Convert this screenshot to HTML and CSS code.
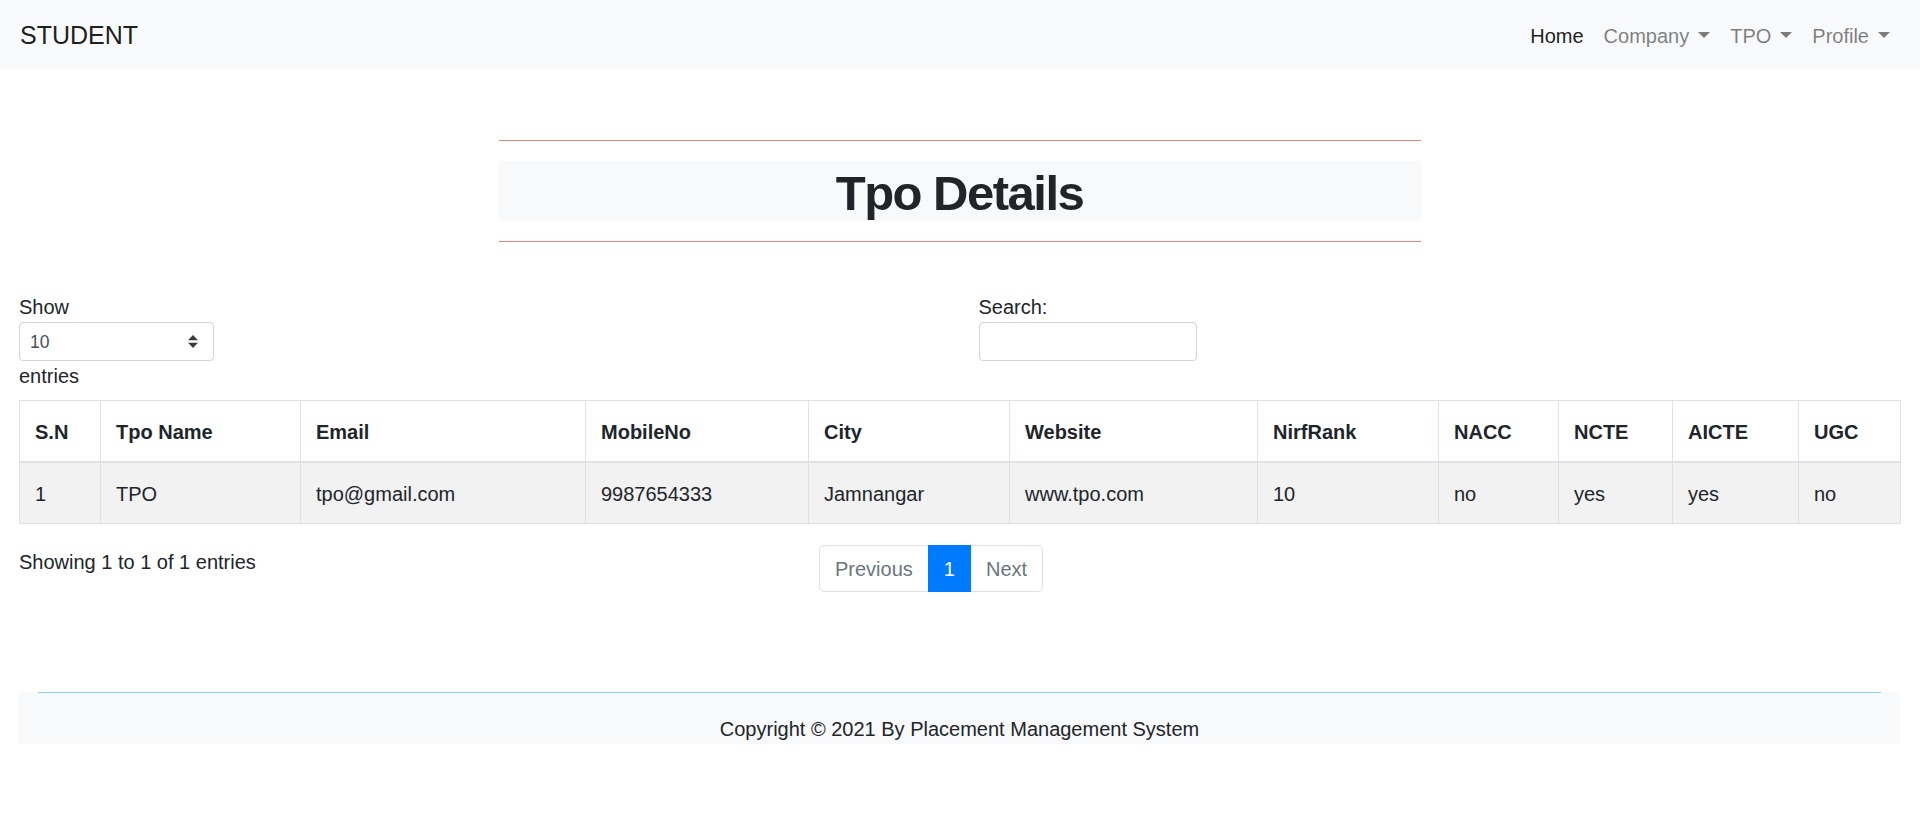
FILE: index.html
```html
<!DOCTYPE html>
<html lang="en">
<head>
<meta charset="utf-8">
<title>Tpo Details</title>
<link rel="stylesheet" href="styles.css">
</head>
<body>
<nav class="navbar">
  <a class="brand" href="#">STUDENT</a>
  <ul class="nav">
    <li><a class="nav-link active" href="#">Home</a></li>
    <li><a class="nav-link" href="#">Company<span class="caret"></span></a></li>
    <li><a class="nav-link" href="#">TPO<span class="caret"></span></a></li>
    <li><a class="nav-link" href="#">Profile<span class="caret"></span></a></li>
  </ul>
</nav>

<main class="page">
  <section class="title-wrap">
    <div class="rule"></div>
    <h1 class="title">Tpo Details</h1>
    <div class="rule"></div>
  </section>

  <div class="dt-top">
    <div class="dt-length">
      <label class="dt-label">Show
        <select class="select-sm">
          <option>10</option>
          <option>25</option>
          <option>50</option>
          <option>100</option>
        </select>
        entries</label>
    </div>
    <div class="dt-filter">
      <label class="dt-label">Search:
        <input class="input-sm" type="search">
      </label>
    </div>
  </div>

  <table class="table">
    <colgroup>
      <col class="c1"><col class="c2"><col class="c3"><col class="c4"><col class="c5"><col class="c6"><col class="c7"><col class="c8"><col class="c9"><col class="c10"><col class="c11">
    </colgroup>
    <thead>
      <tr>
        <th>S.N</th><th>Tpo Name</th><th>Email</th><th>MobileNo</th><th>City</th><th>Website</th><th>NirfRank</th><th>NACC</th><th>NCTE</th><th>AICTE</th><th>UGC</th>
      </tr>
    </thead>
    <tbody>
      <tr class="odd">
        <td>1</td><td>TPO</td><td>tpo@gmail.com</td><td>9987654333</td><td>Jamnangar</td><td>www.tpo.com</td><td>10</td><td>no</td><td>yes</td><td>yes</td><td>no</td>
      </tr>
    </tbody>
  </table>

  <div class="dt-bottom">
    <div class="dt-info">Showing 1 to 1 of 1 entries</div>
    <ul class="pagination">
      <li class="page-item disabled first"><a class="page-link" href="#">Previous</a></li>
      <li class="page-item active"><a class="page-link" href="#">1</a></li>
      <li class="page-item disabled last"><a class="page-link" href="#">Next</a></li>
    </ul>
  </div>
</main>

<footer class="footer">
  <div class="footer-rule"></div>
  <p class="copy">Copyright &copy; 2021 By Placement Management System</p>
</footer>
</body>
</html>
```

FILE: styles.css
```css
* { box-sizing: border-box; }

html, body {
  margin: 0;
  padding: 0;
}

body {
  font-family: "Segoe UI", "Liberation Sans", Arial, sans-serif;
  font-size: 20px;
  line-height: 1.5;
  color: #212529;
  background: #fff;
}

a { text-decoration: none; }

/* Navbar */
.navbar {
  display: flex;
  align-items: center;
  justify-content: space-between;
  height: 70px;
  padding: 10px 20px;
  background: #f8f9fa;
}

.brand {
  font-size: 25px;
  line-height: 37.5px;
  padding-top: 2px;
  color: rgba(0, 0, 0, 0.9);
}

.nav {
  display: flex;
  list-style: none;
  margin: 0;
  padding: 0;
}

.nav-link {
  display: block;
  padding: 11px 10px 9px;
  line-height: 30px;
  color: rgba(0, 0, 0, 0.5);
}

.nav-link.active {
  color: rgba(0, 0, 0, 0.9);
}

.caret {
  display: inline-block;
  margin-left: 9px;
  vertical-align: 0.255em;
  border-top: 0.3em solid;
  border-right: 0.3em solid transparent;
  border-left: 0.3em solid transparent;
  border-bottom: 0;
}

/* Page */
.page {
  padding: 0 20px 0 19px;
}

.title-wrap {
  width: 922px;
  margin: 70px auto 0;
}

.rule {
  height: 0;
  border-top: 1px solid #f08080;
}

.title {
  margin: 20px 0;
  height: 60px;
  padding-top: 2px;
  background: #f8f9fa;
  text-align: center;
  font-size: 49px;
  line-height: 60px;
  font-weight: 700;
  letter-spacing: -1.5px;
  color: #212529;
}

/* DataTables top controls */
.dt-top {
  display: grid;
  grid-template-columns: 1fr 1fr;
  column-gap: 38px;
  margin-top: 50px;
}

.dt-label {
  display: block;
  font-weight: 400;
  line-height: 30px;
}

.select-sm {
  display: block;
  width: 195px;
  height: 39px;
  padding: 0 35px 0 10px;
  font-family: inherit;
  font-size: 17.5px;
  color: #495057;
  background-color: #fff;
  background-image: url("data:image/svg+xml,%3csvg xmlns='http://www.w3.org/2000/svg' width='4' height='5' viewBox='0 0 4 5'%3e%3cpath fill='%23343a40' d='M2 0L0 2h4zm0 5L0 3h4z'/%3e%3c/svg%3e");
  background-repeat: no-repeat;
  background-position: right 15px center;
  background-size: 10px 12.5px;
  border: 1px solid #ced4da;
  border-radius: 4px;
  appearance: none;
  -webkit-appearance: none;
}

.input-sm {
  display: block;
  width: 218px;
  height: 39px;
  padding: 0 10px;
  font-family: inherit;
  font-size: 17.5px;
  color: #495057;
  background: #fff;
  border: 1px solid #ced4da;
  border-radius: 4px;
  -webkit-appearance: none;
  appearance: none;
}

/* Table */
.table {
  width: 100%;
  margin-top: 9px;
  border-collapse: collapse;
  border: 1px solid #dee2e6;
  table-layout: fixed;
}

.c1 { width: 81px; }
.c2 { width: 200px; }
.c3 { width: 285px; }
.c4 { width: 223px; }
.c5 { width: 201px; }
.c6 { width: 248px; }
.c7 { width: 181px; }
.c8 { width: 120px; }
.c9 { width: 114px; }
.c10 { width: 126px; }
.c11 { width: 102px; }

.table th,
.table td {
  padding: 16px 15px 14px;
  line-height: 30px;
  text-align: left;
  vertical-align: top;
  border: 1px solid #dee2e6;
  white-space: nowrap;
}

.table th {
  font-weight: 700;
  border-bottom: 2px solid #dee2e6;
}

.table .odd {
  background: #f2f2f2;
}

/* Bottom controls */
.dt-bottom {
  display: grid;
  grid-template-columns: 762px 1fr;
  column-gap: 38px;
  margin-top: 21px;
}

.dt-info {
  line-height: 30px;
  padding-top: 2px;
}

.pagination {
  display: flex;
  list-style: none;
  margin: 0;
  padding: 0;
}

.page-link {
  display: block;
  padding: 11px 15px 9px;
  line-height: 25px;
  color: #007bff;
  background: #fff;
  border: 1px solid #dee2e6;
  margin-left: -1px;
}

.page-item.first .page-link {
  margin-left: 0;
  border-radius: 5px 0 0 5px;
}

.page-item.last .page-link {
  border-radius: 0 5px 5px 0;
}

.page-item.disabled .page-link {
  color: #6c757d;
}

.page-item.active .page-link {
  position: relative;
  color: #fff;
  background: #007bff;
  border-color: #007bff;
}

/* Footer */
.footer {
  margin: 100px 20px 0 19px;
  padding: 0 19px;
  height: 52px;
  background: #f8f9fa;
}

.footer-rule {
  height: 0;
  border-top: 1px solid #87cefa;
  margin-bottom: 21px;
}

.copy {
  margin: 0;
  text-align: center;
  line-height: 30px;
}
```
